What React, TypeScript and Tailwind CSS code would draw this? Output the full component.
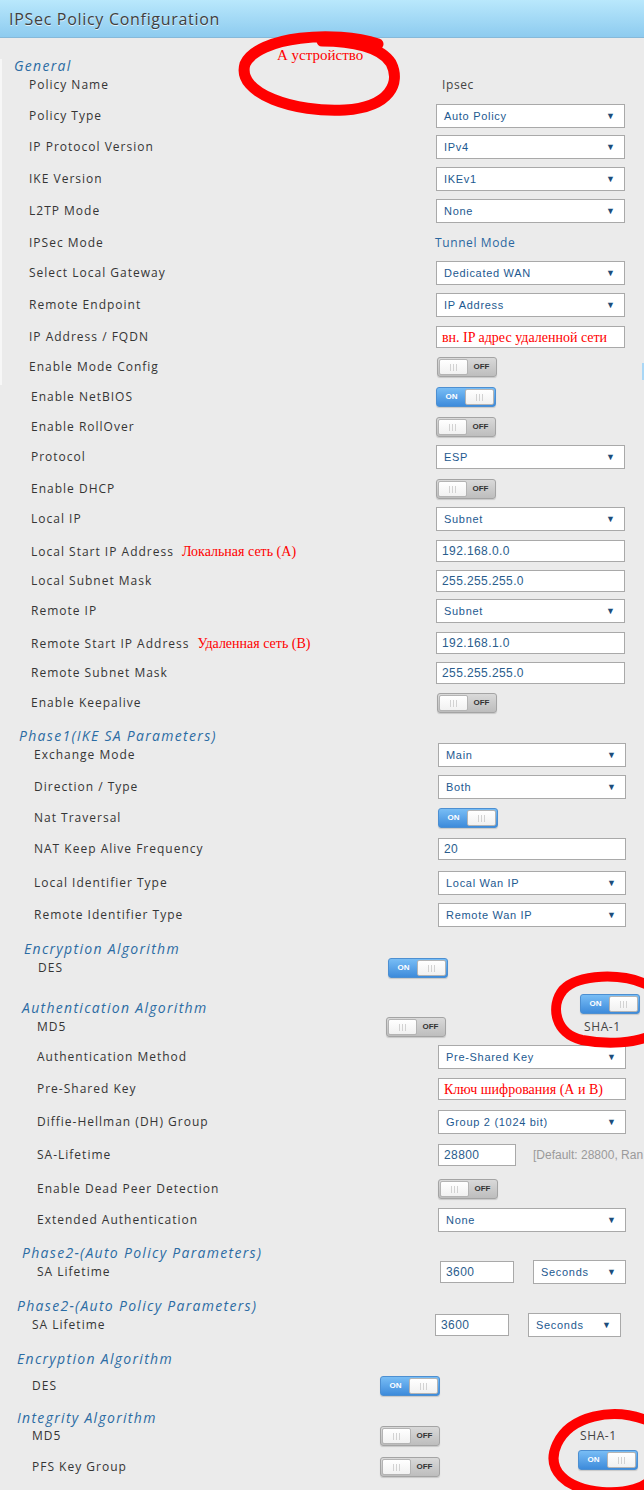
import React from 'react';

const labelFont = "[font-family:'Open_Sans',sans-serif]";

function Toggle({ on }: { on?: boolean }) {
  const knob = (
    <div className="flex h-full w-[29px] items-center justify-center gap-[2px] rounded-[2px] border border-[#b4b4b4] bg-linear-to-b from-white to-[#f1f1f1]">
      <div className="h-[7px] w-px bg-[#d2d2d2]" />
      <div className="h-[7px] w-px bg-[#d2d2d2]" />
      <div className="h-[7px] w-px bg-[#d2d2d2]" />
    </div>
  );
  return (
    <div
      className={`flex h-[20px] w-[60px] shrink-0 rounded-[3px] border p-px shadow-[0_1px_1px_rgba(0,0,0,0.15)] ${
        on ? 'border-[#4d8fd1] bg-linear-to-b from-[#78bdf5] to-[#3d8bdb]' : 'border-[#a4a4a4] bg-linear-to-b from-[#d9d9d9] to-[#bdbdbd]'
      }`}
    >
      {on ? (
        <>
          <div className="flex flex-1 items-center justify-center text-[8px] font-bold text-white [font-family:'Liberation_Sans',sans-serif]">ON</div>
          {knob}
        </>
      ) : (
        <>
          {knob}
          <div className="flex flex-1 items-center justify-center text-[8px] font-bold text-[#333] [font-family:'Liberation_Sans',sans-serif]">OFF</div>
        </>
      )}
    </div>
  );
}

function Select({ value, w = 'w-[189px]' }: { value: string; w?: string }) {
  return (
    <div className={`flex h-[24px] shrink-0 items-center justify-between border border-[#a9a9a9] bg-white pl-[7px] pr-[9px] ${w}`}>
      <span className="text-[11px] tracking-[0.7px] text-[#1d5990] [font-family:'Liberation_Sans',sans-serif]">{value}</span>
      <span className="text-[9px] text-[#1c4d7b]">▼</span>
    </div>
  );
}

function Input({ value, w = 'w-[189px]', red }: { value: string; w?: string; red?: boolean }) {
  return (
    <div className={`flex h-[22px] shrink-0 items-center border border-[#a9a9a9] bg-white pl-[5px] ${w}`}>
      {red ? (
        <span className="whitespace-nowrap text-[14px] text-[#ff0000] [font-family:'Liberation_Serif',serif]">{value}</span>
      ) : (
        <span className="text-[12px] tracking-[0.4px] text-[#2a5d8d] [font-family:'Liberation_Sans',sans-serif]">{value}</span>
      )}
    </div>
  );
}

function Row({ label, lw, mt = '', note, children }: { label: string; lw: string; mt?: string; note?: string; children?: React.ReactNode }) {
  return (
    <div className={`flex h-[24px] items-center ${mt}`}>
      <div className={`shrink-0 whitespace-nowrap text-[12px] tracking-[1px] text-[#353535] ${labelFont} ${lw}`}>
        {label}
        {note && <span className="ml-[8px] tracking-normal text-[14px] text-[#ff0000] [font-family:'Liberation_Serif',serif]">{note}</span>}
      </div>
      {children}
    </div>
  );
}

function Head({ text, cls }: { text: string; cls: string }) {
  return (
    <div className={`whitespace-nowrap text-[14px] italic tracking-[1.3px] text-[#2b6ca4] ${labelFont} ${cls}`}>{text}</div>
  );
}

function Plain({ text, blue }: { text: string; blue?: boolean }) {
  return <span className={`text-[12px] tracking-[0.6px] ${blue ? 'text-[#2a67a0]' : 'text-[#444]'} ${labelFont}`}>{text}</span>;
}

export default function App() {
  const A = 'w-[434px] pl-[27px]';
  const B = 'w-[436px] pl-[31px]';
  const P1 = 'w-[438px] pl-[34px]';

  return (
    <div className="relative h-[1490px] w-[644px] overflow-hidden bg-[#ebebeb]">
      {/* Title bar */}
      <div className="flex h-[38px] items-center border-b border-[#86b9d9] bg-linear-to-b from-[#b9e8fc] to-[#8dcbef] pl-[9px]">
        <span className="text-[16px] tracking-[0.7px] text-[#3f3f3f] [font-family:'Open_Sans',sans-serif] [text-shadow:0_1px_0_rgba(255,255,255,0.7)]">IPSec Policy Configuration</span>
      </div>

      {/* General, part 1 */}
      <div className="border-l-2 border-[#f7f7f7] pb-[6px]">
        <Head text="General" cls="mt-[21px] h-[14px] pl-[12px] leading-[14px]" />
        <Row label="Policy Name" lw="w-[440px] pl-[27px]">
          <Plain text="Ipsec" />
        </Row>
        <Row label="Policy Type" lw={A} mt="mt-[7px]"><Select value="Auto Policy" /></Row>
        <Row label="IP Protocol Version" lw={A} mt="mt-[7px]"><Select value="IPv4" /></Row>
        <Row label="IKE Version" lw={A} mt="mt-[8px]"><Select value="IKEv1" /></Row>
        <Row label="L2TP Mode" lw={A} mt="mt-[8px]"><Select value="None" /></Row>
        <Row label="IPSec Mode" lw="w-[433px] pl-[27px]" mt="mt-[8px]"><Plain text="Tunnel Mode" blue /></Row>
        <Row label="Select Local Gateway" lw={A} mt="mt-[6px]"><Select value="Dedicated WAN" /></Row>
        <Row label="Remote Endpoint" lw={A} mt="mt-[8px]"><Select value="IP Address" /></Row>
        <Row label="IP Address / FQDN" lw={A} mt="mt-[8px]"><Input value="вн. IP  адрес удаленной сети" red /></Row>
        <Row label="Enable Mode Config" lw="w-[435px] pl-[27px]" mt="mt-[6px]"><Toggle /></Row>
      </div>

      {/* General, part 2 */}
      <div>
        <Row label="Enable NetBIOS" lw={B}><Toggle on /></Row>
        <Row label="Enable RollOver" lw={B} mt="mt-[6px]"><Toggle /></Row>
        <Row label="Protocol" lw={B} mt="mt-[6px]"><Select value="ESP" /></Row>
        <Row label="Enable DHCP" lw={B} mt="mt-[8px]"><Toggle /></Row>
        <Row label="Local IP" lw={B} mt="mt-[6px]"><Select value="Subnet" /></Row>
        <Row label="Local Start IP Address" note="Локальная сеть (А)" lw={B} mt="mt-[8px]"><Input value="192.168.0.0" /></Row>
        <Row label="Local Subnet Mask" lw={B} mt="mt-[6px]"><Input value="255.255.255.0" /></Row>
        <Row label="Remote IP" lw={B} mt="mt-[6px]"><Select value="Subnet" /></Row>
        <Row label="Remote Start IP Address" note="Удаленная сеть (В)" lw={B} mt="mt-[8px]"><Input value="192.168.1.0" /></Row>
        <Row label="Remote Subnet Mask" lw={B} mt="mt-[6px]"><Input value="255.255.255.0" /></Row>
        <Row label="Enable Keepalive" lw="w-[437px] pl-[31px]" mt="mt-[6px]"><Toggle /></Row>
      </div>

      {/* Phase 1 */}
      <Head text="Phase1(IKE SA Parameters)" cls="mt-[14px] h-[14px] pl-[19px] leading-[14px]" />
      <Row label="Exchange Mode" lw={P1}><Select value="Main" w="w-[188px]" /></Row>
      <Row label="Direction / Type" lw={P1} mt="mt-[8px]"><Select value="Both" w="w-[188px]" /></Row>
      <Row label="Nat Traversal" lw={P1} mt="mt-[7px]"><Toggle on /></Row>
      <Row label="NAT Keep Alive Frequency" lw={P1} mt="mt-[7px]"><Input value="20" w="w-[188px]" /></Row>
      <Row label="Local Identifier Type" lw={P1} mt="mt-[10px]"><Select value="Local Wan IP" w="w-[188px]" /></Row>
      <Row label="Remote Identifier Type" lw={P1} mt="mt-[8px]"><Select value="Remote Wan IP" w="w-[188px]" /></Row>

      <Head text="Encryption Algorithm" cls="mt-[15px] h-[14px] pl-[24px] leading-[14px]" />
      <Row label="DES" lw="w-[388px] pl-[38px]"><Toggle on /></Row>

      <div className="mt-[21px] flex">
        <div className="w-[580px]">
          <Head text="Authentication Algorithm" cls="h-[14px] pl-[22px] leading-[14px]" />
          <Row label="MD5" lw="w-[386px] pl-[37px]"><Toggle /></Row>
        </div>
        <div className="flex flex-col">
          <div className="-mt-[7px]"><Toggle on /></div>
          <div className="mt-px flex h-[24px] items-center pl-[4px]"><Plain text="SHA-1" /></div>
        </div>
      </div>

      <Row label="Authentication Method" lw="w-[438px] pl-[37px]" mt="mt-[6px]"><Select value="Pre-Shared Key" w="w-[188px]" /></Row>
      <Row label="Pre-Shared Key" lw="w-[438px] pl-[37px]" mt="mt-[8px]"><Input value="Ключ шифрования (А и В)" red w="w-[188px]" /></Row>
      <Row label="Diffie-Hellman (DH) Group" lw="w-[438px] pl-[37px]" mt="mt-[9px]"><Select value="Group 2 (1024 bit)" w="w-[188px]" /></Row>
      <Row label="SA-Lifetime" lw="w-[438px] pl-[37px]" mt="mt-[9px]">
        <Input value="28800" w="w-[78px]" />
        <span className="ml-[17px] whitespace-nowrap text-[12px] text-[#9a9a9a] [font-family:'Liberation_Sans',sans-serif]">[Default: 28800, Ran</span>
      </Row>
      <Row label="Enable Dead Peer Detection" lw="w-[438px] pl-[37px]" mt="mt-[10px]"><Toggle /></Row>
      <Row label="Extended Authentication" lw="w-[438px] pl-[37px]" mt="mt-[7px]"><Select value="None" w="w-[188px]" /></Row>

      {/* Phase 2 */}
      <Head text="Phase2-(Auto Policy Parameters)" cls="mt-[14px] h-[14px] pl-[22px] leading-[14px]" />
      <Row label="SA Lifetime" lw="w-[440px] pl-[37px]">
        <Input value="3600" w="w-[74px]" />
        <div className="ml-[19px]"><Select value="Seconds" w="w-[93px]" /></div>
      </Row>

      <Head text="Phase2-(Auto Policy Parameters)" cls="mt-[15px] h-[14px] pl-[17px] leading-[14px]" />
      <Row label="SA Lifetime" lw="w-[435px] pl-[32px]">
        <Input value="3600" w="w-[74px]" />
        <div className="ml-[19px]"><Select value="Seconds" w="w-[93px]" /></div>
      </Row>

      <Head text="Encryption Algorithm" cls="mt-[15px] h-[14px] pl-[17px] leading-[14px]" />
      <Row label="DES" lw="w-[380px] pl-[32px]" mt="mt-[8px]"><Toggle on /></Row>

      <Head text="Integrity Algorithm" cls="mt-[13px] h-[13px] pl-[17px] leading-[13px]" />
      <div className="flex">
        <div className="w-[578px]">
          <Row label="MD5" lw="w-[380px] pl-[32px]"><Toggle /></Row>
          <Row label="PFS Key Group" lw="w-[380px] pl-[32px]" mt="mt-[7px]"><Toggle /></Row>
        </div>
        <div className="flex flex-col">
          <div className="flex h-[24px] items-center pl-[2px]"><Plain text="SHA-1" /></div>
          <div className="mt-[2px]"><Toggle on /></div>
        </div>
      </div>

      {/* Hand-drawn annotations */}
      <div className="absolute left-[277px] top-[44px] text-[15px] text-[#ff0000] [font-family:'Liberation_Serif',serif]">А устройство</div>
      <svg className="absolute left-[225px] top-[25px]" width="190" height="100" viewBox="225 25 190 100">
        <path
          d="M378 44 C335 30 258 36 245 64 C236 94 296 113 345 110 C390 107 401 83 391 63 C381 47 352 41 322 41"
          fill="none" stroke="#ff0000" strokeWidth="11" strokeLinecap="round"
        />
      </svg>
      <svg className="absolute left-[545px] top-[968px]" width="99" height="85" viewBox="545 968 99 85">
        <path
          d="M650 986 C622 972 578 974 563 990 C550 1006 555 1034 582 1040 C608 1045 636 1043 652 1035"
          fill="none" stroke="#ff0000" strokeWidth="10" strokeLinecap="round"
        />
      </svg>
      <svg className="absolute left-[540px] top-[1405px]" width="104" height="85" viewBox="540 1405 104 85">
        <path
          d="M646 1420 C612 1407 570 1416 557 1444 C545 1470 566 1489 602 1492 C628 1494 646 1487 652 1478"
          fill="none" stroke="#ff0000" strokeWidth="10" strokeLinecap="round"
        />
      </svg>
      <div className="absolute left-[642px] top-[363px] h-[17px] w-[2px] bg-[#a9d7f6]" />
    </div>
  );
}
